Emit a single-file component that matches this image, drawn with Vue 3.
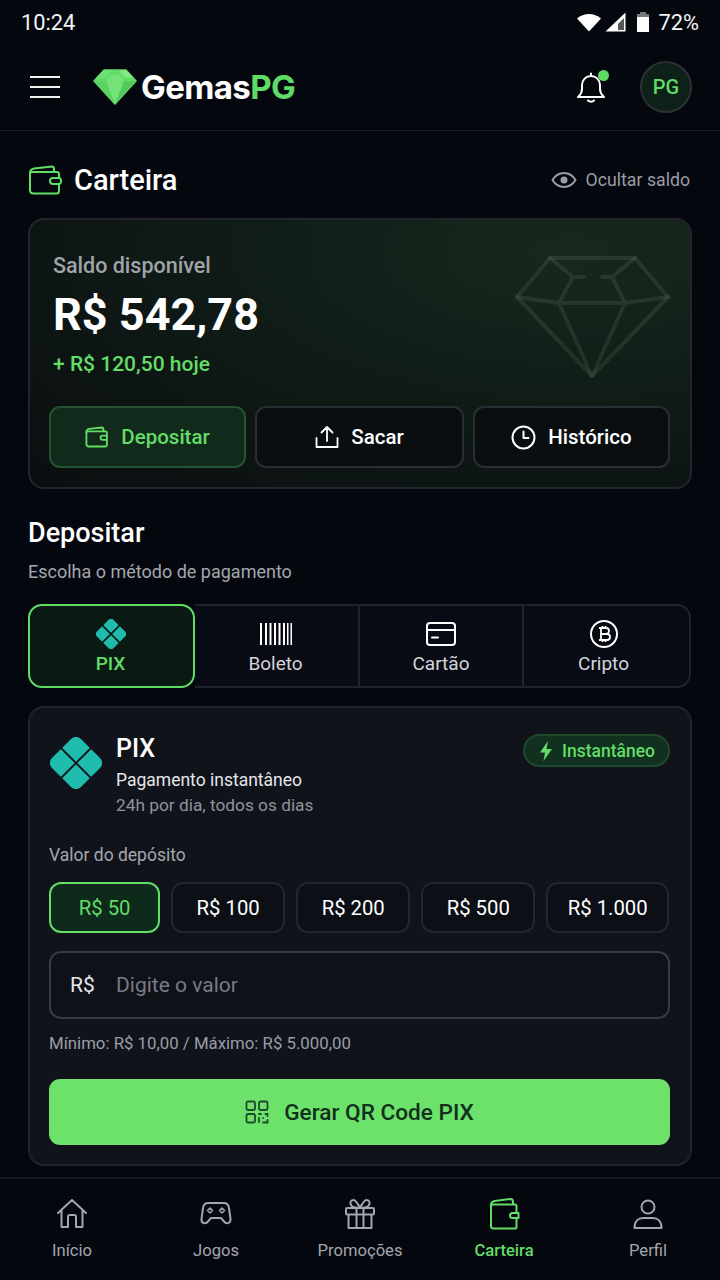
<script setup>
const amounts = [
  { label: 'R$ 50', on: true, w: 111 },
  { label: 'R$ 100', w: 114 },
  { label: 'R$ 200', w: 114 },
  { label: 'R$ 500', w: 114 },
  { label: 'R$ 1.000', w: 123 },
]
</script>

<template>
  <div class="page">
    <div class="status">
      <span>10:24</span>
      <div class="status-right">
        <svg width="26" height="20" viewBox="0 0 26 20"><path d="M1 6.500C4.500 3.500 8.500 2 13 2s8.500 1.500 12 4.500L13 19.500z" fill="#fff"/></svg>
        <svg width="22" height="20" viewBox="0 0 22 20" class="sig"><path d="M20.500 .5v19h-20z" fill="#fff"/><path d="M13 12 19 6v12h-6z" fill="#555"/></svg>
        <svg width="14" height="22" viewBox="0 0 14 22" class="bat"><path d="M4 1h6v2h3v18H1V3h3z" fill="#fff"/><path d="M4 1h6v2h3v3H1V3h3z" fill="#777"/></svg>
        <span>72%</span>
      </div>
    </div>

    <header class="top">
      <div class="burger"><i></i><i></i><i></i></div>
      <svg class="logo" width="44" height="38" viewBox="0 0 44 38" stroke-linejoin="round">
        <path d="M11 2h22l10 11-21 23L1 13z" fill="#63dd68" stroke="#63dd68" stroke-width="1.500"/>
        <path d="M11 2h9l-9 8H3z" fill="#6fe074"/>
        <path d="M33 2l7 8-8-1-6-6z" fill="#84e888"/>
        <path d="M13 14c2-5 5-7 9-7s7 2 9 7l-9 22z" fill="#76e37a"/>
        <path d="M1 13h12l9 23z" fill="#58d35f"/>
        <path d="M43 13H31l-9 23z" fill="#52cb5a"/>
      </svg>
      <div class="brand">Gemas<b>PG</b></div>
      <div class="bell">
        <svg width="30" height="32" viewBox="0 0 30 32" fill="none" stroke="#fff" stroke-width="2" stroke-linecap="round" stroke-linejoin="round"><path d="M2 26c2-2 4-3.500 4-8v-4c0-5 4-9 9-9s9 4 9 9v4c0 4.500 2 6 4 8z"/><path d="M15 2.500V5M12 29.500c1.500 1.500 4.500 1.500 6 0"/></svg>
        <i class="dot"></i>
      </div>
      <div class="avatar">PG</div>
    </header>

    <main class="content">
      <div class="title-row">
        <svg class="wallet" width="34" height="30" viewBox="0 0 34 30" fill="none" stroke="#62dd66" stroke-width="2" stroke-linecap="round" stroke-linejoin="round">
          <path d="M2 8c0-3 2-4 4-4.500L24 1.500c1.500 0 2 1 2 2.500v3"/>
          <path d="M2 8v17c0 2 1.500 3.500 3.500 3.500h23c1.500 0 2.500-1 2.500-2.500V9c0-1.500-1-2-2.500-2H5c-2 0-3 .5-3 1z"/>
          <path d="M31 13h-6a3 3 0 0 0 0 6h6c1.500 0 2-1 2-3s-.500-3-2-3z" fill="#05070f"/>
        </svg>
        <h1>Carteira</h1>
        <svg class="eye" width="26" height="18" viewBox="0 0 26 18" fill="none" stroke="#9a9da6" stroke-width="2"><path d="M1.500 9C4.500 4 8.500 2 13 2s8.500 2 11.500 7c-3 5-7 7-11.500 7S4.500 14 1.500 9z"/><circle cx="13" cy="9" r="3.500" fill="#9a9da6" stroke="none"/></svg>
        <span class="hide">Ocultar saldo</span>
      </div>

      <section class="balance">
        <svg class="gem" width="155" height="122" viewBox="0 0 155 122" fill="none" stroke="#a9d2af" stroke-opacity=".11" stroke-width="4" stroke-linejoin="round" stroke-linecap="round">
          <path d="M35 2h85l33 39-76 79L2 41z"/>
          <path d="M35 2l23 19h11M120 2 97 21H87M58 21 44 47M97 21l13 26M2 41l42 6h66l43-6M44 47l33 73 33-73"/>
        </svg>
        <div class="lbl">Saldo disponível</div>
        <div class="amount">R$ 542,78</div>
        <div class="today">+ R$ 120,50 hoje</div>
        <div class="actions">
          <button class="act act-on" style="flex:197">
            <svg width="24" height="22" viewBox="0 0 34 30" fill="none" stroke="#62dd66" stroke-width="2.600" stroke-linecap="round" stroke-linejoin="round"><path d="M2 8c0-3 2-4 4-4.500L24 1.500c1.500 0 2 1 2 2.500v3"/><path d="M2 8v17c0 2 1.500 3.500 3.500 3.500h23c1.500 0 2.500-1 2.500-2.500V9c0-1.500-1-2-2.500-2H5c-2 0-3 .5-3 1z"/><path d="M31 13h-6a3 3 0 0 0 0 6h6"/></svg>
            Depositar
          </button>
          <button class="act" style="flex:209">
            <svg width="24" height="24" viewBox="0 0 24 24" fill="none" stroke="#fff" stroke-width="1.800" stroke-linecap="round" stroke-linejoin="round"><path d="M12 16V2M6.500 7.500 12 2l5.500 5.500M1.500 13v9h21v-9"/></svg>
            Sacar
          </button>
          <button class="act" style="flex:197">
            <svg width="25" height="25" viewBox="0 0 25 25" fill="none" stroke="#fff" stroke-width="2" stroke-linecap="round" stroke-linejoin="round"><circle cx="12.500" cy="12.500" r="11"/><path d="M12.500 6.500v6.500h5"/></svg>
            Histórico
          </button>
        </div>
      </section>

      <h2>Depositar</h2>
      <p class="sub">Escolha o método de pagamento</p>

      <div class="tabs">
        <div class="tab tab-on">
          <svg width="30" height="30" viewBox="0 0 52 52"><rect x="5.500" y="5.500" width="41" height="41" rx="7" fill="#1fbcae" transform="rotate(45 26 26)"/><path d="M11 11 41 41M41 11 11 41" stroke="#0a1a13" stroke-width="2.800"/></svg>
          <span>PIX</span>
        </div>
        <div class="tab tab-b">
          <svg width="34" height="24" viewBox="0 0 34 24" fill="#fff"><path d="M1 1h2v22H1zM6 1h2v22H6zM10.500 1h2v22h-2zM15 1h2v22h-2zM19.500 1h2v22h-2zM24 1h2v22h-2zM28 1h1.500v22H28zM31.500 1h1.500v22h-1.500z"/></svg>
          <span>Boleto</span>
        </div>
        <div class="tab tab-k">
          <svg width="30" height="24" viewBox="0 0 30 24" fill="none" stroke="#fff" stroke-width="2" stroke-linecap="round"><rect x="1" y="1" width="28" height="22" rx="3"/><path d="M1 8h28M6 15.500h6"/></svg>
          <span>Cartão</span>
        </div>
        <div class="tab tab-c">
          <svg width="30" height="30" viewBox="0 0 30 30" fill="none" stroke="#fff" stroke-width="2"><circle cx="15" cy="15" r="13"/><path d="M12 9h5a3 3 0 0 1 0 6h-5h6a3 3 0 0 1 0 6h-6zM12 9v12M13.500 7v2M16.500 7v2M13.500 21v2M16.500 21v2M10 9h2M10 21h2" stroke-width="1.800"/></svg>
          <span>Cripto</span>
        </div>
      </div>

      <section class="pix">
        <div class="pix-head">
          <svg class="pix-logo" width="52" height="52" viewBox="0 0 52 52"><rect x="5.500" y="5.500" width="41" height="41" rx="7" fill="#1fbcae" transform="rotate(45 26 26)"/><path d="M11 11 41 41M41 11 11 41" stroke="#11131b" stroke-width="1.800"/></svg>
          <div class="pix-text">
            <div class="pix-name">PIX</div>
            <div class="pix-line">Pagamento instantâneo</div>
            <div class="pix-line2">24h por dia, todos os dias</div>
          </div>
          <div class="badge">
            <svg width="14" height="20" viewBox="0 0 14 20"><path d="M9 0 1 11.500h5L4.500 20 13 8H7.500z" fill="#62dd66"/></svg>
            Instantâneo
          </div>
        </div>
        <div class="val-lbl">Valor do depósito</div>
        <div class="chips">
          <button v-for="a in amounts" :key="a.label" class="chip" :class="{ 'chip-on': a.on }" :style="{ flexGrow: a.w }">{{ a.label }}</button>
        </div>
        <div class="input">
          <span class="cur">R$</span>
          <span class="ph">Digite o valor</span>
        </div>
        <div class="limits">Mínimo: R$ 10,00 / Máximo: R$ 5.000,00</div>
        <button class="cta">
          <svg width="24" height="24" viewBox="0 0 24 24" fill="none" stroke="#1d4a2b" stroke-width="1.800" stroke-linecap="round"><rect x="1.500" y="1.500" width="8.500" height="8.500" rx="1.500"/><rect x="14" y="1.500" width="8.500" height="8.500" rx="1.500"/><rect x="1.500" y="14" width="8.500" height="8.500" rx="1.500"/><path d="M14 14h2M20.500 14h2v2M14 18v4M18 18h.01M18 22.500h4.500v-2.500"/></svg>
          Gerar QR Code PIX
        </button>
      </section>
    </main>

    <nav class="nav">
      <div class="nav-item">
        <svg width="32" height="32" viewBox="0 0 32 32" fill="none" stroke="#a3a6ae" stroke-width="2" stroke-linejoin="round" stroke-linecap="round"><path d="M2 15 16 2l14 13M5.500 12v17h6.500v-10a2 2 0 0 1 2-2h4a2 2 0 0 1 2 2v10h6.500V12"/></svg>
        <span>Início</span>
      </div>
      <div class="nav-item">
        <svg width="32" height="32" viewBox="0 0 32 32" fill="none" stroke="#a3a6ae" stroke-width="2" stroke-linejoin="round"><path d="M8 5h16c3 0 4.500 2 5 5l1.500 11c.5 4-3.500 5.500-6 3l-3.500-4H11l-3.500 4c-2.500 2.500-6.500 1-6-3L3 10c.5-3 2-5 5-5z"/><path d="M10 10l2.500 2.500L10 15l-2.500-2.500zM22 10l2.500 2.500L22 15l-2.500-2.500z" stroke-width="1.500"/></svg>
        <span>Jogos</span>
      </div>
      <div class="nav-item">
        <svg width="32" height="32" viewBox="0 0 32 32" fill="none" stroke="#a3a6ae" stroke-width="2" stroke-linejoin="round"><rect x="2" y="10" width="28" height="6.500" rx="1"/><path d="M4.500 16.500V30h23V16.500M12.500 10v20M19.500 10v20"/><path d="M16 10c-2-4-4-8-6.500-8C7 2 6 4 6.500 6c.5 2.500 3 4 9.500 4zM16 10c2-4 4-8 6.500-8 2.500 0 3.500 2 3 4-.5 2.500-3 4-9.500 4z"/></svg>
        <span>Promoções</span>
      </div>
      <div class="nav-item nav-on">
        <svg width="32" height="32" viewBox="0 0 32 32" fill="none" stroke="#62dd66" stroke-width="2" stroke-linejoin="round" stroke-linecap="round"><path d="M3 7c0-2 1.500-3.500 3.500-4l16-2c2 0 2.500 1 2.500 3v2"/><path d="M3 7v21c0 1.500 1 2.500 2.500 2.500H27c1 0 1.500-.5 1.500-1.500V8c0-1-.5-1.500-1.500-1.500H5C3.500 6.500 3 7 3 8"/><path d="M30.500 15h-6a2.500 2.500 0 0 0 0 5h6z" fill="#05070f"/></svg>
        <span>Carteira</span>
      </div>
      <div class="nav-item">
        <svg width="32" height="32" viewBox="0 0 32 32" fill="none" stroke="#a3a6ae" stroke-width="2" stroke-linejoin="round"><circle cx="16" cy="9" r="6.500"/><path d="M2.500 30c0-7 4-10 8.500-10h10c4.500 0 8.500 3 8.500 10z"/></svg>
        <span>Perfil</span>
      </div>
    </nav>
  </div>
</template>

<style>
html, body { margin: 0; background: #05070f; }
</style>

<style scoped>
* { box-sizing: border-box; }
.page {
  width: 720px; height: 1280px; overflow: hidden; display: flex; flex-direction: column;
  background: #05070f; color: #fff; font-family: Roboto, "Liberation Sans", sans-serif;
}
.status {
  height: 44px; flex: none; padding: 0 21px; display: flex; align-items: center; justify-content: space-between;
  font-size: 21.800px; color: #f4f4f4;
}
.status-right { display: flex; align-items: center; gap: 3px; }
.sig { margin-right: 6px; }
.bat { margin-right: 6px; }
.top {
  height: 87px; flex: none; padding: 0 28px 0 30px; display: flex; align-items: center; border-bottom: 1px solid #1a1d24;
}
.burger { width: 30px; display: flex; flex-direction: column; gap: 8px; margin-right: 33px; }
.burger i { display: block; height: 2px; background: #f2f2f2; }
.logo { margin-right: 4px; }
.brand { font-family: Inter, Roboto, sans-serif; font-weight: 700; font-size: 33px; letter-spacing: -.6px; flex: 1; }
.brand b { color: #5fdc65; font-weight: 700; }
.bell { position: relative; width: 30px; height: 36px; margin-right: 34px; display: flex; align-items: center; }
.dot { position: absolute; width: 11px; height: 11px; border-radius: 50%; background: #5fdc65; right: -3px; top: 1px; }
.avatar {
  width: 52px; height: 52px; border-radius: 50%; border: 2px solid #2b3035; background: #0e2118;
  display: flex; align-items: center; justify-content: center; color: #5fdc65; font-size: 20px; font-weight: 500;
}
.content { flex: 1; padding: 0 28px; min-height: 0; }
.title-row { display: flex; align-items: center; height: 87px; padding: 10px 2px 0 0; }
.wallet { margin-right: 12px; }
h1 { margin: 0; font-size: 29px; font-weight: 500; flex: 1; }
.eye { margin-right: 9px; }
.hide { font-size: 17.700px; color: #9a9da6; }
.balance {
  position: relative; height: 271px; border: 2px solid #22262c; border-radius: 16px; padding: 33px 20px 0 19px;
  background: radial-gradient(ellipse at 82% 12%, #18281e 0%, #0f1a16 50%, #0a0e10 100%);
}
.gem { position: absolute; right: 20px; top: 36px; }
.lbl { font-size: 21.500px; font-weight: 500; color: #a0a3a9; line-height: 26px; padding-left: 4px; }
.amount { font-size: 45px; font-weight: 700; line-height: 56px; margin-top: 8px; padding-left: 4px; }
.today { font-size: 21px; font-weight: 500; color: #62dd66; line-height: 26px; margin-top: 8px; padding-left: 4px; }
.actions { display: flex; gap: 9px; margin-top: 29px; }
.act {
  height: 62px; border-radius: 11px; border: 2px solid #2a2d33; background: #0a0e10; color: #fff;
  font: 500 20.500px Roboto, sans-serif; display: flex; align-items: center; justify-content: center; gap: 12px; padding: 0;
}
.act-on { background: #122a1b; border-color: #25522f; color: #62dd66; }
h2 { margin: 26px 0 0; font-size: 27px; font-weight: 500; line-height: 36px; }
.sub { margin: 10px 0 0; font-size: 18px; line-height: 22px; color: #a4a7ad; }
.tabs { display: flex; margin: 21px 1px 0 0; height: 84px; }
.tab {
  display: flex; flex-direction: column; align-items: center; justify-content: center; gap: 3px; padding-top: 3px;
  border: 2px solid #20232c; border-left-width: 0; background: #090b14; color: #d4d5da; font-size: 19px; font-weight: 400;
}
.tab svg { height: 30px; }
.tab span { line-height: 24px; }
.tab:last-child { border-radius: 0 14px 14px 0; }
.tab-on { flex: 0 0 167px; border: 2px solid #5fdc65; border-radius: 14px; background: #0a1a13; color: #5fdc65; font-weight: 500; padding-right: 2px; }
.tab-b { flex: 0 0 165px; padding-right: 2px; }
.tab-k { flex: 0 0 164px; }
.tab-c { flex: 0 0 167px; padding-right: 6px; }
.pix {
  margin-top: 18px; height: 460px; border: 2px solid #20232c; border-radius: 16px; background: #11131b; padding: 20px 20px 0 19px;
}
.pix-head { display: flex; align-items: flex-start; height: 88px; padding-top: 8px; }
.pix-logo { margin: 1px 0 0 1px; }
.pix-text { flex: 1; margin-left: 14px; margin-top: -2px; }
.pix-name { font-size: 25px; font-weight: 500; line-height: 30px; }
.pix-line { font-size: 17.500px; line-height: 22px; margin-top: 5px; color: #e6e6ea; }
.pix-line2 { font-size: 17.300px; line-height: 22px; margin-top: 3px; color: #8f929b; }
.badge {
  height: 33px; margin-top: -2px; border-radius: 17px; border: 2px solid #1c4a2a; background: #11301f; color: #62dd66;
  font-size: 17.500px; display: flex; align-items: center; gap: 9px; padding: 0 13px 0 14px; font-weight: 500;
}
.val-lbl { margin-top: 28px; font-size: 17.500px; line-height: 22px; color: #a4a7ad; }
.chips { display: flex; gap: 11px; margin: 16px 1px 0 0; }
.chip {
  flex: 1 1 0; height: 51px; border-radius: 12px; border: 2px solid #23262f; background: #0d0f17; color: #fff;
  font: 400 20.300px Roboto, sans-serif; padding: 0; white-space: nowrap;
}
.chip-on { background: #0e2a1b; border-color: #62dd66; color: #62dd66; }
.input {
  margin-top: 18px; height: 68px; border-radius: 12px; border: 2px solid #383b44; background: #0f1119;
  display: flex; align-items: center; padding-left: 19px; font-size: 21px;
}
.cur { width: 46px; color: #e6e6ea; }
.ph { color: #787b84; }
.limits { margin-top: 13px; font-size: 16.800px; line-height: 22px; color: #9a9da6; }
.cta {
  width: 100%; margin-top: 25px; height: 66px; border: 0; border-radius: 11px; background: #6ce26b; color: #12301c;
  font: 500 22.600px Roboto, sans-serif; display: flex; align-items: center; justify-content: center; gap: 15px;
}
.nav {
  flex: none; height: 103px; border-top: 2px solid #14171d; display: flex; padding: 19px 0 0; background: #05070f;
}
.nav-item { width: 144px; display: flex; flex-direction: column; align-items: center; color: #a3a6ae; font-size: 16.600px; gap: 9px; }
.nav-item span { line-height: 24px; }
.nav-on { color: #62dd66; font-weight: 500; }
</style>
